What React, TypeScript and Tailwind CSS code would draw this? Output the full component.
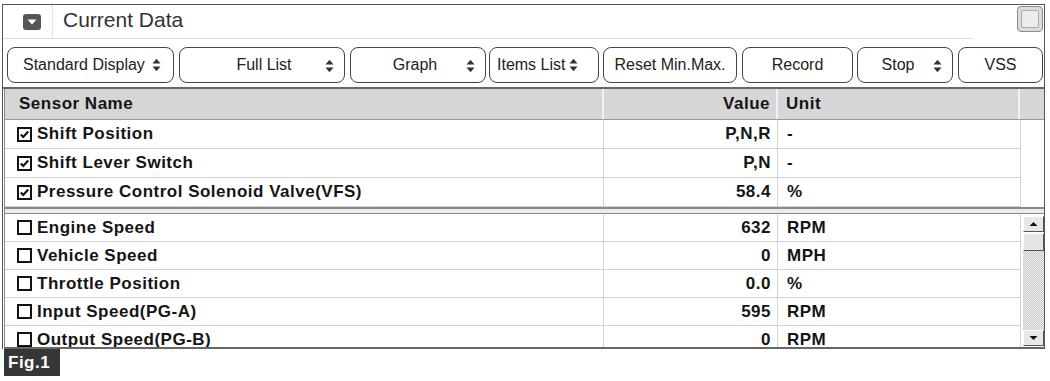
import React from "react";

const Spinner = () => (
  <svg width="9" height="14" viewBox="0 0 9 14" className="shrink-0">
    <path d="M0.5 5.5 L4.5 0.8 L8.5 5.5Z" fill="#333" />
    <path d="M0.5 8.5 L4.5 13.2 L8.5 8.5Z" fill="#333" />
  </svg>
);

const Check = ({ on }: { on: boolean }) => (
  <svg width="15" height="15" viewBox="0 0 15 15" className="shrink-0">
    <rect x="1" y="1" width="13" height="13" fill="white" stroke="#111" strokeWidth="2" />
    {on && <path d="M3.8 7.4 L6.3 10 L11.2 4.6" fill="none" stroke="#111" strokeWidth="2.2" />}
  </svg>
);

const buttons = [
  { label: "Standard Display", w: "w-[167px]", ml: "ml-[4px]", spin: true, cls: "justify-start pl-[15px] gap-[7px]" },
  { label: "Full List", w: "w-[166px]", ml: "ml-[5px]", spin: true, cls: "justify-center pl-[4px]" },
  { label: "Graph", w: "w-[136px]", ml: "ml-[5px]", spin: true, cls: "justify-center pr-[6px]" },
  { label: "Items List", w: "w-[110px]", ml: "ml-[3px]", spin: true, cls: "justify-start pl-[7px] gap-[4px]" },
  { label: "Reset Min.Max.", w: "w-[134px]", ml: "ml-[4px]", spin: false, cls: "justify-center" },
  { label: "Record", w: "w-[111px]", ml: "ml-[5px]", spin: false, cls: "justify-center" },
  { label: "Stop", w: "w-[96px]", ml: "ml-[4px]", spin: true, cls: "justify-center pr-[14px]" },
  { label: "VSS", w: "w-[85px]", ml: "ml-[5px]", spin: false, cls: "justify-center" },
];

const upper = [
  { name: "Shift Position", value: "P,N,R", unit: "-" },
  { name: "Shift Lever Switch", value: "P,N", unit: "-" },
  { name: "Pressure Control Solenoid Valve(VFS)", value: "58.4", unit: "%" },
];

const lower = [
  { name: "Engine Speed", value: "632", unit: "RPM" },
  { name: "Vehicle Speed", value: "0", unit: "MPH" },
  { name: "Throttle Position", value: "0.0", unit: "%" },
  { name: "Input Speed(PG-A)", value: "595", unit: "RPM" },
  { name: "Output Speed(PG-B)", value: "0", unit: "RPM" },
];

const Row = ({ name, value, unit, on, h }: { name: string; value: string; unit: string; on: boolean; h: string }) => (
  <div className={`grid grid-cols-[599px_174px_242px] ${h} shrink-0 border-b border-[#d2d2d2] text-[17px] font-bold tracking-[0.5px] text-[#151515]`}>
    <div className="flex items-center gap-[5px] pl-[12px] border-r border-[#d2d2d2]">
      <Check on={on} />
      <span>{name}</span>
    </div>
    <div className="flex items-center justify-end pr-[6px] border-r border-[#d2d2d2]">{value}</div>
    <div className="flex items-center pl-[9px]">{unit}</div>
  </div>
);

const ScrollArrow = ({ up }: { up: boolean }) => (
  <div className="h-[16px] w-[21px] shrink-0 bg-[#e8e8e8] border border-t-white border-l-white border-r-[#555] border-b-[#555] flex items-center justify-center">
    <svg width="9" height="6" viewBox="0 0 9 6">
      <path d={up ? "M0.5 5 L4.5 1 L8.5 5Z" : "M0.5 1 L4.5 5 L8.5 1Z"} fill="#111" />
    </svg>
  </div>
);

export default function App() {
  return (
    <div className="w-[1050px] h-[381px] bg-white pt-[4px] font-['Liberation_Sans',Arial,sans-serif]">
      <div className="ml-[2px] w-[1043px] border-x border-t border-[#555]">
        {/* title bar */}
        <div className="flex h-[33px]">
          <div className="flex items-center w-[50px] border-r border-[#e2e2e2]">
            <div className="w-[18px] h-[16px] rounded-[3px] bg-[#555] flex items-center justify-center ml-[20px]">
              <svg width="10" height="6" viewBox="0 0 10 6">
                <path d="M0.5 0.5 L9.5 0.5 L5 5.5Z" fill="white" />
              </svg>
            </div>
          </div>
          <div className="flex-1 flex items-center pl-[10px] pb-[3px] text-[21px] text-[#333]">Current Data</div>
          <div className="pt-[1px] pr-[1px]">
            <div className="w-[26px] h-[26px] rounded-[4px] border border-[#8a8a8a] bg-[#dcdcdc] p-[3px]">
              <div className="w-full h-full rounded-[2px] border border-[#aaa] bg-[#ececec]" />
            </div>
          </div>
        </div>
        <div className="h-px w-[970px] bg-[#dedede]" />

        {/* toolbar */}
        <div className="flex pt-[8px] pb-[4px]">
          {buttons.map((b) => (
            <div
              key={b.label}
              className={`${b.w} ${b.ml} relative h-[36px] shrink-0 rounded-[8px] border border-[#444] flex items-center text-[16px] text-[#222] ${b.cls}`}
            >
              <span>{b.label}</span>
              {b.spin && (b.label === "Standard Display" || b.label === "Items List") && <Spinner />}
              {b.spin && !(b.label === "Standard Display" || b.label === "Items List") && (
                <span className="absolute right-[10px] top-[11px]">
                  <Spinner />
                </span>
              )}
            </div>
          ))}
        </div>
        <div className="h-[2px] bg-[#666]" />

        {/* table */}
        <div className="ml-px border-l border-[#888]">
          <div className="grid grid-cols-[599px_174px_242px_1fr] h-[31px] bg-[#d6d6d6] border-b border-[#9a9a9a] text-[17px] font-bold tracking-[0.5px] text-[#151515]">
            <div className="flex items-center pl-[14px] border-r-2 border-r-[#f2f2f2]">Sensor Name</div>
            <div className="flex items-center justify-end pr-[6px] border-r-2 border-r-[#f2f2f2]">Value</div>
            <div className="flex items-center pl-[8px] border-r-2 border-r-[#f2f2f2]">Unit</div>
            <div />
          </div>
          <div className="grid grid-cols-[1fr_24px]">
            <div>
              {upper.map((r) => (
                <Row key={r.name} {...r} on={true} h="h-[29px]" />
              ))}
            </div>
            <div className="border-l border-[#d2d2d2]" />
          </div>
          <div className="h-[7px] bg-[#ececec] border-t-2 border-b border-[#8a8a8a]" />
          <div className="flex h-[133px]">
            <div className="flex-1 flex flex-col overflow-hidden">
              {lower.map((r) => (
                <Row key={r.name} {...r} on={false} h="h-[28px]" />
              ))}
            </div>
            <div className="w-[24px] h-full border-l border-[#d2d2d2] pl-[2px] pt-[2px] pb-px flex flex-col">
              <ScrollArrow up={true} />
              <div className="h-[18px] w-[21px] shrink-0 mt-px bg-[#e4e4e4] border border-t-white border-l-white border-r-[#555] border-b-[#555]" />
              <div className="flex-1 w-[21px] bg-[repeating-conic-gradient(#c4c4c4_0%_25%,#f4f4f4_0%_50%)] bg-[length:2px_2px]" />
              <ScrollArrow up={false} />
            </div>
          </div>
          <div className="h-[2px] bg-[#666]" />
        </div>
      </div>
      <div className="ml-[4px] w-[56px] h-[27px] bg-[#363636] text-white font-bold text-[17px] flex items-center pl-[4px] tracking-[0.5px]">
        Fig.1
      </div>
    </div>
  );
}
